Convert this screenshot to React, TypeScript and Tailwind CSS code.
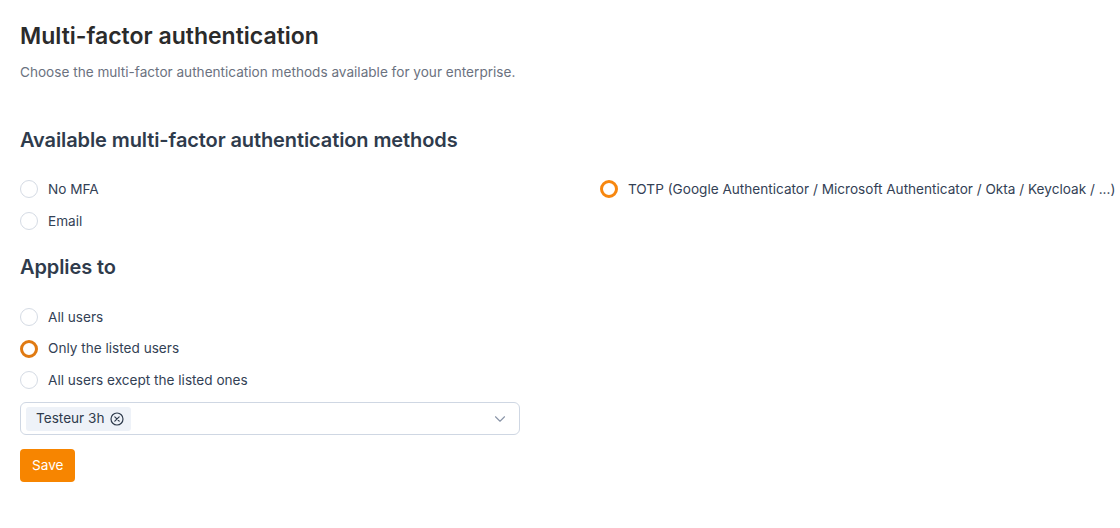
import { ChevronDown } from "lucide-react";

type RadioProps = {
  label: string;
  checked?: boolean;
  tone?: "bright" | "deep";
};

function Radio({ label, checked = false, tone = "bright" }: RadioProps) {
  return (
    <label className="flex items-center gap-[10px] h-[20px] text-[13.6px] text-[#334155] whitespace-nowrap">
      {checked ? (
        <span
          className={
            tone === "bright"
              ? "w-[18px] h-[18px] rounded-full border-[3px] border-[#f7870f] bg-white"
              : "w-[18px] h-[18px] rounded-full border-[3px] border-[#e07a12] bg-white"
          }
        />
      ) : (
        <span className="w-[18px] h-[18px] rounded-full border border-[#d5dbe4] bg-white" />
      )}
      {label}
    </label>
  );
}

export default function App() {
  return (
    <div
      className="w-[1120px] h-[528px] bg-white px-5 pt-[22px] overflow-hidden"
      style={{ fontFamily: "Inter, 'Noto Sans', sans-serif" }}
    >
      <h1 className="text-[23px] font-semibold leading-[28px] text-[#2b2b2b]">
        Multi-factor authentication
      </h1>
      <p className="mt-[13px] text-[13.6px] leading-[18px] text-[#6b7280]">
        Choose the multi-factor authentication methods available for your enterprise.
      </p>

      {/* Methods */}
      <h2 className="mt-[46px] text-[20px] font-semibold leading-[26px] text-[#2f3b4c] tracking-[-0.1px]">
        Available multi-factor authentication methods
      </h2>
      <div className="mt-[26px] grid grid-cols-[580px_1fr] gap-y-[12px]">
        <Radio label="No MFA" />
        <Radio label="TOTP (Google Authenticator / Microsoft Authenticator / Okta / Keycloak / ...)" checked />
        <Radio label="Email" />
      </div>

      {/* Scope */}
      <h2 className="mt-[23px] text-[20px] font-semibold leading-[26px] text-[#2f3b4c] tracking-[-0.1px]">
        Applies to
      </h2>
      <div className="mt-[27px] flex flex-col gap-[11.5px]">
        <Radio label="All users" />
        <Radio label="Only the listed users" checked tone="deep" />
        <Radio label="All users except the listed ones" />
      </div>

      <div className="mt-[12px] w-[500px] h-[33px] flex items-center justify-between rounded-[6px] border border-[#cfd7e3] pl-[5px] pr-[10px]">
        <span className="flex items-center gap-[6px] h-[24px] rounded-[3px] bg-[#eef2f8] pl-[10px] pr-[7px] text-[13.6px] text-[#2f3b4c]">
          Testeur 3h
          <svg width="14" height="14" viewBox="0 0 14 14" fill="none" stroke="#2f3b4c" strokeWidth="1.2">
            <circle cx="7" cy="7" r="6" />
            <path d="M4.8 4.8l4.4 4.4M9.2 4.8l-4.4 4.4" strokeLinecap="round" />
          </svg>
        </span>
        <ChevronDown className="w-[18px] h-[18px] text-[#8a95a8]" strokeWidth={1.5} />
      </div>

      <button className="mt-[14px] h-[33px] px-[12px] rounded-[4px] bg-[#f78500] text-white text-[13.6px]">
        Save
      </button>
    </div>
  );
}
